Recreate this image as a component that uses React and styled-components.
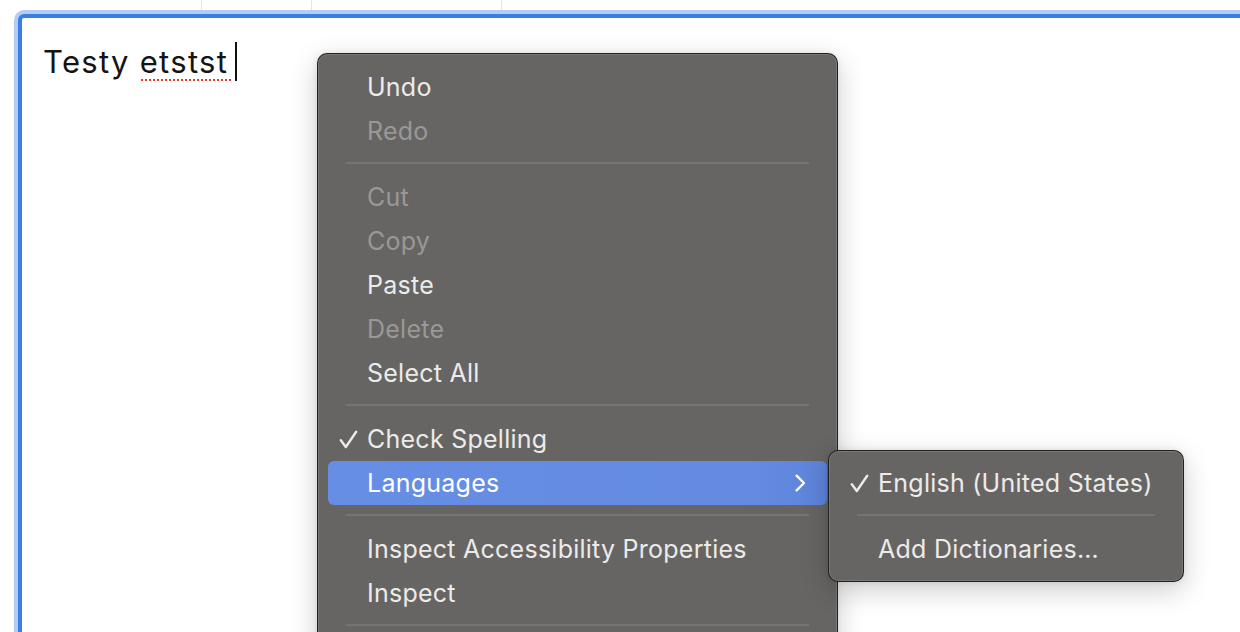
import React from "react";
import styled, { createGlobalStyle } from "styled-components";

const GlobalStyle = createGlobalStyle`
  html, body {
    margin: 0;
    padding: 0;
    background: #ffffff;
  }
  body {
    font-family: Inter, "Noto Sans", "Liberation Sans", sans-serif;
    -webkit-font-smoothing: antialiased;
  }
`;

const Page = styled.div`
  position: relative;
  width: 1240px;
  height: 632px;
  overflow: hidden;
  background: #ffffff;
`;

const HeaderStrip = styled.div`
  display: flex;
  height: 10px;
`;

const HeaderCell = styled.div`
  flex: 0 0 ${(p) => p.$w}px;
  box-sizing: border-box;
  border-right: 1px solid #e4e4e6;
`;

const Editor = styled.div`
  margin: 4px 0 0 18px;
  width: 1260px;
  height: 700px;
  box-sizing: border-box;
  border: 4px solid #3a80e4;
  border-radius: 6px;
  box-shadow: 0 0 0 4px #b5cdf4;
  background: #ffffff;
  padding: 24px 21px;
`;

const EditorLine = styled.div`
  font-family: Inter, "Liberation Sans", sans-serif;
  font-size: 31px;
  line-height: 39px;
  letter-spacing: 1.3px;
  color: #141414;
  white-space: nowrap;
`;

/* misspelled word with the red dotted spell-check underline */
const Misspelled = styled.span`
  position: relative;
  &::after {
    content: "";
    position: absolute;
    left: 1px;
    width: 90px;
    top: 36px;
    height: 2px;
    background: repeating-linear-gradient(
      90deg,
      #e8352a 0px,
      #e8352a 2px,
      transparent 2px,
      transparent 4px
    );
  }
`;

const Caret = styled.span`
  display: inline-block;
  width: 2px;
  height: 39px;
  margin-left: 7px;
  vertical-align: top;
  background: #111111;
`;

const Menu = styled.div`
  position: absolute;
  left: ${(p) => p.$x}px;
  top: ${(p) => p.$y}px;
  width: ${(p) => p.$w}px;
  box-sizing: border-box;
  padding: ${(p) => p.$pad}px 0;
  background: #676563;
  border: 1px solid rgba(20, 20, 20, 0.85);
  border-radius: 10px;
  box-shadow: inset 0 0 0 1px rgba(255, 255, 255, 0.13),
    0 8px 28px rgba(0, 0, 0, 0.2), 0 0 6px rgba(0, 0, 0, 0.08);
  font-family: Inter, "Liberation Sans", sans-serif;
  font-size: 25px;
  letter-spacing: 0.25px;
  z-index: ${(p) => p.$z};
`;

const Item = styled.div`
  display: flex;
  align-items: center;
  height: 44px;
  margin: 0 10px;
  padding: 0 21px 0 11px;
  border-radius: 6px;
  line-height: 44px;
  white-space: nowrap;
  color: ${(p) => (p.$disabled ? "#9a9896" : p.$active ? "#ffffff" : "#ebebea")};
  background: ${(p) =>
    p.$active ? "linear-gradient(90deg, #678ee5 0%, #648ae2 85%, #5d84da 100%)" : "transparent"};
`;

const CheckSlot = styled.span`
  flex: 0 0 28px;
  display: flex;
  align-items: center;
  height: 100%;
`;

const Label = styled.span`
  flex: 1;
`;

const Separator = styled.div`
  height: 2px;
  margin: 9px 28px 11px;
  background: #767472;
`;

const Check = () => (
  <svg width="19" height="19" viewBox="0 0 19 19" fill="none">
    <path
      d="M1.8 10.2 L6.8 17 L17.2 1.8"
      stroke="currentColor"
      strokeWidth="2.4"
      strokeLinecap="round"
      strokeLinejoin="round"
    />
  </svg>
);

const Chevron = () => (
  <svg width="11" height="18" viewBox="0 0 11 18" fill="none">
    <path
      d="M1.6 1.6 L9 9 L1.6 16.4"
      stroke="#ffffff"
      strokeWidth="2.3"
      strokeLinecap="round"
      strokeLinejoin="round"
    />
  </svg>
);

const MenuRow = ({ label, disabled, active, checked, submenu }) => (
  <Item $disabled={disabled} $active={active}>
    <CheckSlot>{checked && <Check />}</CheckSlot>
    <Label>{label}</Label>
    {submenu && <Chevron />}
  </Item>
);

const mainItems = [
  { label: "Undo" },
  { label: "Redo", disabled: true },
  "sep",
  { label: "Cut", disabled: true },
  { label: "Copy", disabled: true },
  { label: "Paste" },
  { label: "Delete", disabled: true },
  { label: "Select All" },
  "sep",
  { label: "Check Spelling", checked: true },
  { label: "Languages", active: true, submenu: true },
  "sep",
  { label: "Inspect Accessibility Properties" },
  { label: "Inspect" },
  "sep",
];

const languageItems = [
  { label: "English (United States)", checked: true },
  "sep",
  { label: "Add Dictionaries…" },
];

const renderItems = (items) =>
  items.map((it, i) =>
    it === "sep" ? <Separator key={i} /> : <MenuRow key={i} {...it} />
  );

export default function App() {
  return (
    <>
      <GlobalStyle />
      <Page>
        <HeaderStrip>
          <HeaderCell $w={202} />
          <HeaderCell $w={110} />
          <HeaderCell $w={190} />
        </HeaderStrip>
        <Editor>
          <EditorLine>
            Testy <Misspelled>etstst</Misspelled>
            <Caret />
          </EditorLine>
        </Editor>

        <Menu $x={317} $y={53} $w={521} $pad={11} $z={1}>
          {renderItems(mainItems)}
        </Menu>
        <Menu $x={828} $y={450} $w={356} $pad={10} $z={2}>
          {renderItems(languageItems)}
        </Menu>
      </Page>
    </>
  );
}
